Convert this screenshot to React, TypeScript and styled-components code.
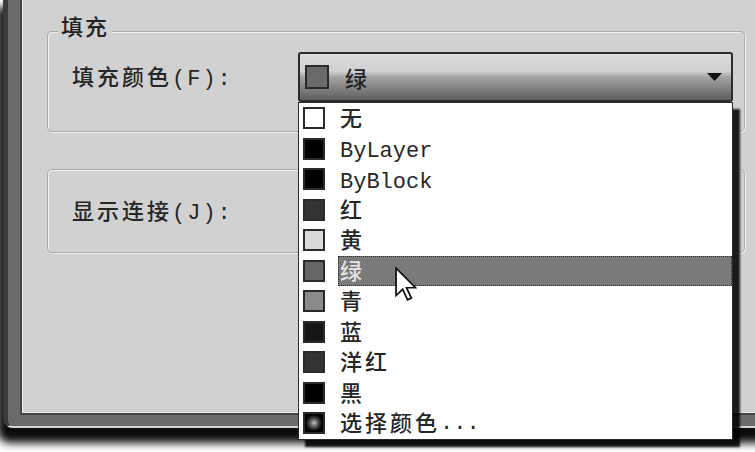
import React from "react";
import styled, { createGlobalStyle } from "styled-components";

const GlobalStyle = createGlobalStyle`
  *, *::before, *::after { box-sizing: border-box; }
  html, body { margin: 0; padding: 0; background: #ffffff; }
  body {
    width: 755px;
    height: 452px;
    overflow: hidden;
    font-family: "Noto Sans CJK SC", "Liberation Sans", sans-serif;
  }
`;

const Screen = styled.div`
  width: 755px;
  height: 452px;
  overflow: hidden;
  background: #ffffff;
`;

const Window = styled.div`
  display: flex;
  width: 820px;
  height: 428px;
  margin-left: 3px;
  padding: 0 0 11px 12px;
  background: #6b6b6b;
  border-left: 5px solid #3a3a3a;
  border-bottom: 2px solid #d4d4d4;
  border-bottom-left-radius: 9px;
  box-shadow: -2px 11px 9px 4px rgba(0, 0, 0, 0.95);
`;

const Panel = styled.div`
  flex: 1;
  display: flex;
  flex-direction: column;
  padding: 31px 0 0 25px;
  background: #d1d1d1;
  border-left: 2px solid #454545;
  border-bottom: 2px solid #454545;
  box-shadow: inset 1px -1px 0 #ececec;
`;

const GroupBox = styled.section<{ $h: number }>`
  display: flex;
  flex-direction: column;
  width: 698px;
  height: ${(p) => p.$h}px;
  flex: none;
  border: 1px solid #a9a9a9;
  border-radius: 5px;
  box-shadow: inset 1px 1px 0 #f1f1f1, 1px 1px 0 #f1f1f1;
  & + & {
    margin-top: 37px;
  }
`;

const Legend = styled.div`
  align-self: flex-start;
  margin: -20px 0 0 10px;
  padding: 0 3px;
  background: #d1d1d1;
  font-size: 22px;
  font-weight: 500;
  line-height: 26px;
  letter-spacing: 2px;
  color: #222;
`;

const Row = styled.div<{ $top?: number }>`
  display: flex;
  align-items: center;
  padding: ${(p) => p.$top ?? 0}px 0 0 24px;
  flex: ${(p) => (p.$top === undefined ? 1 : "none")};
`;

const Label = styled.div`
  width: 226px;
  flex: none;
  font-size: 22px;
  font-weight: 500;
  line-height: 28px;
  letter-spacing: 3px;
  color: #262626;
  white-space: nowrap;
`;

const Mono = styled.span<{ $ls?: number; $dy?: number }>`
  font-family: "Liberation Mono", "Noto Sans CJK SC", monospace;
  font-size: 22px;
  font-weight: 400;
  letter-spacing: ${(p) => p.$ls ?? 0}px;
  margin-top: ${(p) => p.$dy ?? 0}px;
`;

const ComboWrap = styled.div`
  position: relative;
  width: 435px;
  flex: none;
`;

const Combo = styled.div`
  display: flex;
  align-items: center;
  height: 50px;
  padding: 0 9px 0 5px;
  border: 2px solid #2c2c2c;
  border-radius: 3px;
  background: linear-gradient(
    to bottom,
    #dcdcdc 0%,
    #d0d0d0 38%,
    #a3a3a3 50%,
    #858585 72%,
    #5e5e5e 100%
  );
`;

const Swatch = styled.span<{ $fill: string; $size: number }>`
  display: inline-block;
  flex: none;
  width: ${(p) => p.$size}px;
  height: ${(p) => p.$size}px;
  background: ${(p) => p.$fill};
  border: 2px solid #2a2a2a;
`;

const ComboText = styled.span`
  margin-left: 16px;
  font-size: 22px;
  font-weight: 500;
  line-height: 28px;
  color: #222;
`;

const Arrow = styled.svg`
  margin-left: auto;
  flex: none;
`;

const List = styled.ul`
  position: absolute;
  top: 100%;
  left: 0;
  width: 435px;
  margin: 0;
  padding: 0;
  list-style: none;
  background: #ffffff;
  border: 1px solid #2a2a2a;
  box-shadow: 7px 7px 2px rgba(0, 0, 0, 0.88);
  z-index: 5;
`;

const Item = styled.li`
  display: flex;
  align-items: center;
  height: 30.5px;
  padding-left: 4px;
`;

const ItemText = styled.div<{ $active?: boolean }>`
  flex: 1;
  align-self: stretch;
  display: flex;
  align-items: center;
  margin-left: 13px;
  padding: 0 0 4px 2px;
  font-size: 22px;
  font-weight: 500;
  letter-spacing: 3px;
  color: ${(p) => (p.$active ? "#e4e4e4" : "#262626")};
  background: ${(p) => (p.$active ? "#7a7a7a" : "transparent")};
  outline: ${(p) => (p.$active ? "1px dotted #2a2a2a" : "none")};
  outline-offset: -1px;
`;

const Cursor = styled.svg`
  position: absolute;
  left: 96px;
  top: 164px;
  z-index: 6;
`;

type ColorItem = { fill: string; label: React.ReactNode; active?: boolean };

const items: ColorItem[] = [
  { fill: "#ffffff", label: "无" },
  { fill: "#000000", label: <Mono $dy={10}>ByLayer</Mono> },
  { fill: "#000000", label: <Mono $dy={10}>ByBlock</Mono> },
  { fill: "#333333", label: "红" },
  { fill: "#d9d9d9", label: "黄" },
  { fill: "#666666", label: "绿", active: true },
  { fill: "#8a8a8a", label: "青" },
  { fill: "#161616", label: "蓝" },
  { fill: "#333333", label: "洋红" },
  { fill: "#000000", label: "黑" },
  {
    fill: "radial-gradient(ellipse at center, #c8c8c8 0%, #5a5a5a 30%, #000 65%)",
    label: (
      <>
        选择颜色<Mono $dy={4}>...</Mono>
      </>
    ),
  },
];

export default function App() {
  return (
    <>
      <GlobalStyle />
      <Screen>
        <Window>
          <Panel>
            <GroupBox $h={101}>
              <Legend>填充</Legend>
              <Row $top={14}>
                <Label>
                  填充颜色<Mono $ls={2}>(F):</Mono>
                </Label>
                <ComboWrap>
                  <Combo>
                    <Swatch $fill="#6a6a6a" $size={24} />
                    <ComboText>绿</ComboText>
                    <Arrow width="15" height="8" viewBox="0 0 15 8">
                      <path d="M0 0 H15 L7.5 8 Z" fill="#111" />
                    </Arrow>
                  </Combo>
                  <List>
                    {items.map((it, i) => (
                      <Item key={i}>
                        <Swatch $fill={it.fill} $size={22} />
                        <ItemText $active={it.active}>{it.label}</ItemText>
                      </Item>
                    ))}
                    <Cursor width="22" height="34" viewBox="0 0 12.6 19.5">
                      <path
                        d="M0.6 0.6 L0.6 16.4 L4.4 12.8 L7.2 18.8 L9.4 17.8 L6.6 11.9 L11.8 11.9 Z"
                        fill="#ffffff"
                        stroke="#111"
                        strokeWidth="1"
                        strokeLinejoin="miter"
                      />
                    </Cursor>
                  </List>
                </ComboWrap>
              </Row>
            </GroupBox>
            <GroupBox $h={84}>
              <Row>
                <Label>
                  显示连接<Mono $ls={2}>(J):</Mono>
                </Label>
              </Row>
            </GroupBox>
          </Panel>
        </Window>
      </Screen>
    </>
  );
}
